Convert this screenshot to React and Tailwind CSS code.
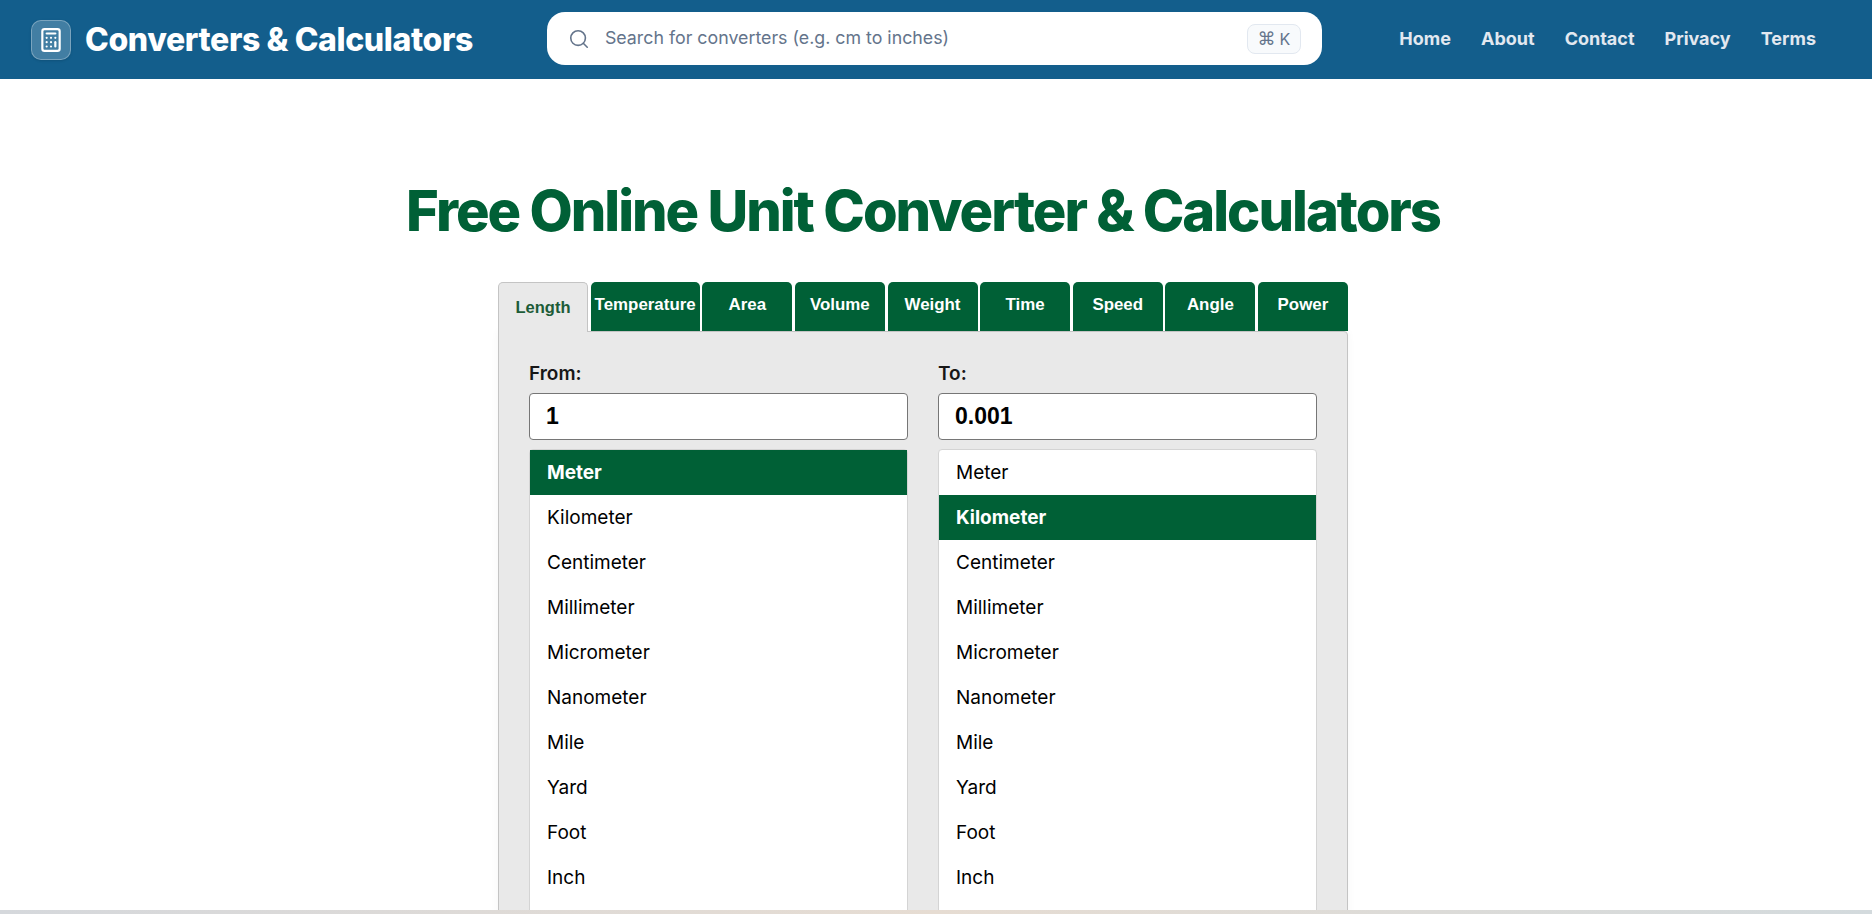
import { Calculator, Search } from "lucide-react";

const navLinks = ["Home", "About", "Contact", "Privacy", "Terms"];
const tabs = ["Length", "Temperature", "Area", "Volume", "Weight", "Time", "Speed", "Angle", "Power"];
const units = ["Meter", "Kilometer", "Centimeter", "Millimeter", "Micrometer", "Nanometer", "Mile", "Yard", "Foot", "Inch"];

const UnitColumn = ({ label, value, selected }) => (
  <div className="w-[379px]">
    <label className="block h-[31px] text-[19px] leading-[24px] font-semibold text-[#171717]">{label}</label>
    <input
      readOnly
      value={value}
      className="block w-full h-[47px] px-4 bg-white border border-[#767676] rounded-[4px] text-[23px] font-bold text-black font-['Liberation_Sans',sans-serif] outline-none"
    />
    <ul className="mt-[9px] pb-[45px] bg-white border border-[#d4d4d4] rounded-[4px]">
      {units.map((unit) =>
        unit === selected ? (
          <li key={unit} className="h-[45px] pl-[17px] pt-[2px] flex items-center text-[19px] font-bold text-white bg-[#006036]">
            {unit}
          </li>
        ) : (
          <li key={unit} className="h-[45px] pl-[17px] pt-[2px] flex items-center text-[19px] text-black">
            {unit}
          </li>
        )
      )}
    </ul>
  </div>
);

export default function App() {
  return (
    <div className="h-screen flex flex-col overflow-hidden bg-white font-['Inter',sans-serif]">
      <header className="shrink-0 h-[79px] bg-[#135e8c] flex items-center pl-[31px] pr-[56px]">
        <div className="flex items-center gap-[14px]">
          <div className="w-10 h-10 rounded-[10px] bg-white/20 border border-white/30 flex items-center justify-center shadow-sm">
            <Calculator size={26} strokeWidth={2} className="text-white" />
          </div>
          <span className="text-[32px] leading-none font-extrabold tracking-[-0.38px] text-white">Converters &amp; Calculators</span>
        </div>

        <div className="w-[775px] h-[53px] ml-[74px] mb-[2px] bg-white rounded-[18px] flex items-center pl-[21px] pr-[21px]">
          <Search size={22} strokeWidth={1.75} className="text-[#64748b] shrink-0" />
          <span className="ml-[15px] flex-1 text-[17.8px] text-[#64748b]">Search for converters (e.g. cm to inches)</span>
          <kbd className="h-[30px] w-[54px] rounded-[8px] bg-[#f8fafc] border border-[#e2e8f0] flex items-center justify-center gap-1 text-[#64748b] font-['Inter',sans-serif]">
            <span className="text-[18px] font-['DejaVu_Sans',sans-serif]">⌘</span>
            <span className="text-[16px]">K</span>
          </kbd>
        </div>

        <nav className="flex items-center gap-[30px] ml-auto mb-[2px]">
          {navLinks.map((link) => (
            <a key={link} className="text-[18px] font-bold text-[#e2e8f0]">
              {link}
            </a>
          ))}
        </nav>
      </header>

      <main className="flex-1 min-h-0 overflow-hidden pr-[26px]">
        <h1 className="mt-[98px] text-center text-[56px] leading-[68px] font-extrabold tracking-[-2px] text-[#006036]">
          Free Online Unit Converter &amp; Calculators
        </h1>

        <div className="w-[850px] mx-auto mt-[37px]">
          <div className="flex justify-between h-[49px] font-['Liberation_Sans',sans-serif] font-bold">
            {tabs.map((tab, i) =>
              i === 0 ? (
                <button key={tab} className="min-w-[90px] relative z-10 h-[50px] bg-[#e9e9e9] border border-b-0 border-[#c4c4c4] rounded-t-[5px] text-[16.5px] text-[#1d5c38]">
                  {tab}
                </button>
              ) : (
                <button key={tab} className="min-w-[90px] px-1 bg-[#006036] rounded-t-[5px] text-[16.9px] text-white pb-[3px]">
                  {tab}
                </button>
              )
            )}
          </div>

          <div className="flex gap-[30px] p-[30px] bg-[#e9e9e9] border border-[#c4c4c4] rounded-tr-[4px] shadow-[0_0_8px_rgba(0,0,0,0.04)]">
            <UnitColumn label="From:" value="1" selected="Meter" />
            <UnitColumn label="To:" value="0.001" selected="Kilometer" />
          </div>
        </div>
      </main>

      <div className="shrink-0 h-[4px] bg-gradient-to-r from-[#d5d8dc] via-[#e6dcd2] to-[#d3dadd]" />
    </div>
  );
}
